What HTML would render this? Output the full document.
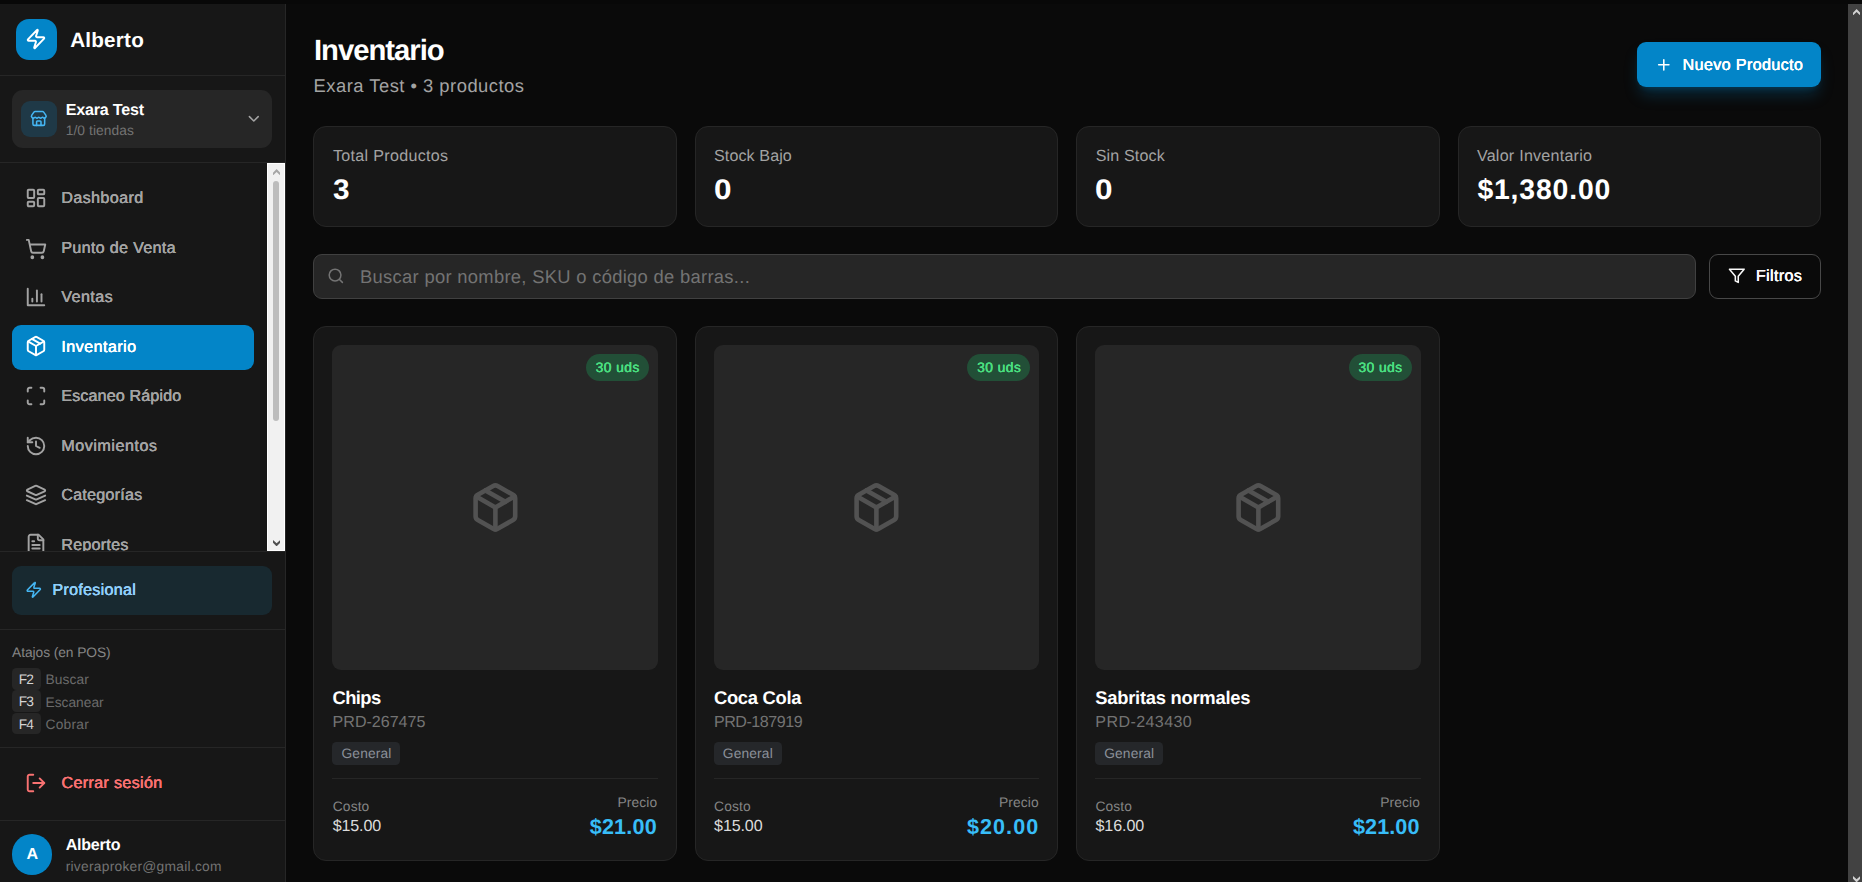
<!DOCTYPE html>
<html lang="es">
<head>
<meta charset="utf-8">
<title>Inventario - Exara Test</title>
<style>
*{box-sizing:border-box;margin:0;padding:0}
html,body{width:1862px;height:882px;overflow:hidden;background:#0a0a0a}
body{position:relative;font-family:"Liberation Sans",sans-serif;color:#fff}
a{color:inherit;text-decoration:none}
button{font:inherit;color:inherit;border:0;background:none;text-align:left}
.a{position:absolute}
.t{position:absolute;white-space:nowrap;line-height:1;text-rendering:geometricPrecision;font-family:"Liberation Sans",sans-serif;font-style:normal}
.ln{position:absolute;background:#262626}
svg.i{position:absolute;fill:none;stroke:currentColor;stroke-width:2.1;stroke-linecap:round;stroke-linejoin:round;overflow:visible}
.card{position:absolute;background:#171717;border:1px solid #262626;border-radius:13px}
.img{position:absolute;background:#262626;border-radius:9px}
.badge{position:absolute;background:#224f37;border-radius:14px}
.tag{position:absolute;background:#25272a;border-radius:4.5px}
.kbd{position:absolute;background:#262626;border-radius:4.5px;font:inherit}
</style>
</head>
<body>
<div class="a" style="left:0px;top:0px;width:1862px;height:4px;background:#080808;"></div>
<aside class="a sidebar" style="left:0px;top:4px;width:286px;height:878px;background:#171717;border-right:1px solid #262626;">
 <header class="a brand" style="left:0px;top:0px;width:285px;height:71px;">
  <div class="a logo" style="left:16px;top:15px;width:40.7px;height:40.8px;border-radius:13px;background:#0385c8;">
   <svg class="i" width="22" height="22" viewBox="0 0 24 24" style="left:8.9px;top:9.3px;color:#fff"><path d="M4 14a1 1 0 0 1-.78-1.63l9.9-10.2a.5.5 0 0 1 .86.46l-1.92 6.02A1 1 0 0 0 13 10h7a1 1 0 0 1 .78 1.63l-9.9 10.2a.5.5 0 0 1-.86-.46l1.92-6.02A1 1 0 0 0 11 14z"/></svg>
  </div>
  <strong class="t" style="left:70.2px;top:27.02px;font-size:20.69px;font-weight:700;color:#ffffff;letter-spacing:0.199px;">Alberto</strong>
 </header>
 <div class="ln" style="left:0px;top:71px;width:285px;height:1px;"></div>
 <div class="a store" style="left:12px;top:86px;width:260px;height:58px;border-radius:11px;background:#262626;">
  <div class="a" style="left:9.2px;top:11.4px;width:35.4px;height:35.4px;border-radius:9px;background:#1f3947;">
   <svg class="i" width="17.6" height="17.6" viewBox="0 0 24 24" style="left:9.1px;top:8.9px;color:#45b6f3"><path d="M15 21v-5a1 1 0 0 0-1-1h-4a1 1 0 0 0-1 1v5"/><path d="M17.774 10.31a1.12 1.12 0 0 0-1.549 0 2.5 2.5 0 0 1-3.451 0 1.12 1.12 0 0 0-1.548 0 2.5 2.5 0 0 1-3.452 0 1.12 1.12 0 0 0-1.549 0 2.5 2.5 0 0 1-3.77-3.248l2.889-4.184A2 2 0 0 1 7 2h10a2 2 0 0 1 1.653.873l2.895 4.192a2.5 2.5 0 0 1-3.774 3.244"/><path d="M4 10.95V19a2 2 0 0 0 2 2h12a2 2 0 0 0 2-2v-8.05"/></svg>
  </div>
  <strong class="t" style="left:53.7px;top:12.02px;font-size:16.09px;font-weight:700;color:#ffffff;letter-spacing:-0.193px;">Exara Test</strong>
  <span class="t" style="left:53.7px;top:34.02px;font-size:13.79px;font-weight:400;color:#737373;letter-spacing:0.086px;">1/0 tiendas</span>
  <svg class="i" width="17.6" height="17.6" viewBox="0 0 24 24" style="left:233.2px;top:20.2px;color:#a3a3a3"><path d="m6 9 6 6 6-6"/></svg>
 </div>
 <div class="ln" style="left:0px;top:158px;width:285px;height:1px;"></div>
 <nav class="a" style="left:0px;top:159px;width:267px;height:388px;overflow:hidden;">
  <a class="a item" style="left:12px;top:13px;width:242px;height:45px;">
   <svg class="i" width="22" height="22" viewBox="0 0 24 24" style="left:13.2px;top:10.9px;color:#a3a3a3"><rect width="7" height="9" x="3" y="3" rx="1"/><rect width="7" height="5" x="14" y="3" rx="1"/><rect width="7" height="9" x="14" y="12" rx="1"/><rect width="7" height="5" x="3" y="16" rx="1"/></svg>
   <span class="t" style="left:49.3px;top:14.02px;font-size:16.09px;font-weight:400;color:#a3a3a3;letter-spacing:0.405px;text-shadow:0.17px 0 0 currentColor,-0.17px 0 0 currentColor;">Dashboard</span>
  </a>
  <a class="a item" style="left:12px;top:63px;width:242px;height:45px;">
   <svg class="i" width="22" height="22" viewBox="0 0 24 24" style="left:13.4px;top:11.5px;color:#a3a3a3"><circle cx="8" cy="21" r="1"/><circle cx="19" cy="21" r="1"/><path d="M2.05 2.05h2l2.66 12.42a2 2 0 0 0 2 1.58h9.78a2 2 0 0 0 1.95-1.57l1.65-7.43H5.12"/></svg>
   <span class="t" style="left:49.3px;top:14.02px;font-size:16.09px;font-weight:400;color:#a3a3a3;letter-spacing:0.333px;text-shadow:0.17px 0 0 currentColor,-0.17px 0 0 currentColor;">Punto de Venta</span>
  </a>
  <a class="a item" style="left:12px;top:113px;width:242px;height:45px;">
   <svg class="i" width="22" height="22" viewBox="0 0 24 24" style="left:13.2px;top:9.9px;color:#a3a3a3"><path d="M3 3v18h18"/><path d="M18 17V9"/><path d="M13 17V5"/><path d="M8 17v-3"/></svg>
   <span class="t" style="left:49.3px;top:13.02px;font-size:16.09px;font-weight:400;color:#a3a3a3;letter-spacing:0.446px;text-shadow:0.17px 0 0 currentColor,-0.17px 0 0 currentColor;">Ventas</span>
  </a>
  <a class="a item active" style="left:12px;top:162px;width:242px;height:45px;border-radius:9px;background:#0385c8;">
   <svg class="i" width="22" height="22" viewBox="0 0 24 24" style="left:13.2px;top:10.4px;color:#fff"><path d="m7.5 4.27 9 5.15"/><path d="M21 8a2 2 0 0 0-1-1.73l-7-4a2 2 0 0 0-2 0l-7 4A2 2 0 0 0 3 8v8a2 2 0 0 0 1 1.73l7 4a2 2 0 0 0 2 0l7-4A2 2 0 0 0 21 16Z"/><path d="m3.3 7 8.7 5 8.7-5"/><path d="M12 22V12"/></svg>
   <span class="t" style="left:49.3px;top:14.02px;font-size:16.09px;font-weight:400;color:#ffffff;letter-spacing:0.466px;text-shadow:0.17px 0 0 currentColor,-0.17px 0 0 currentColor;">Inventario</span>
  </a>
  <a class="a item" style="left:12px;top:211px;width:242px;height:45px;">
   <svg class="i" width="22" height="22" viewBox="0 0 24 24" style="left:13.2px;top:10.9px;color:#a3a3a3"><path d="M3 7V5a2 2 0 0 1 2-2h2"/><path d="M17 3h2a2 2 0 0 1 2 2v2"/><path d="M21 17v2a2 2 0 0 1-2 2h-2"/><path d="M7 21H5a2 2 0 0 1-2-2v-2"/></svg>
   <span class="t" style="left:49.3px;top:14.02px;font-size:16.09px;font-weight:400;color:#a3a3a3;letter-spacing:0.146px;text-shadow:0.17px 0 0 currentColor,-0.17px 0 0 currentColor;">Escaneo Rápido</span>
  </a>
  <a class="a item" style="left:12px;top:261px;width:242px;height:45px;">
   <svg class="i" width="22" height="22" viewBox="0 0 24 24" style="left:13.2px;top:11.1px;color:#a3a3a3"><path d="M3 12a9 9 0 1 0 9-9 9.75 9.75 0 0 0-6.74 2.74L3 8"/><path d="M3 3v5h5"/><path d="M12 7v5l4 2"/></svg>
   <span class="t" style="left:49.3px;top:14.02px;font-size:16.09px;font-weight:400;color:#a3a3a3;letter-spacing:0.545px;text-shadow:0.17px 0 0 currentColor,-0.17px 0 0 currentColor;">Movimientos</span>
  </a>
  <a class="a item" style="left:12px;top:311px;width:242px;height:45px;">
   <svg class="i" width="22" height="22" viewBox="0 0 24 24" style="left:13.2px;top:9.9px;color:#a3a3a3"><path d="m12.83 2.18a2 2 0 0 0-1.66 0L2.6 6.08a1 1 0 0 0 0 1.83l8.58 3.91a2 2 0 0 0 1.66 0l8.58-3.9a1 1 0 0 0 0-1.83Z"/><path d="m22 17.65-9.17 4.16a2 2 0 0 1-1.66 0L2 17.65"/><path d="m22 12.65-9.17 4.16a2 2 0 0 1-1.66 0L2 12.65"/></svg>
   <span class="t" style="left:49.3px;top:13.02px;font-size:16.09px;font-weight:400;color:#a3a3a3;letter-spacing:0.249px;text-shadow:0.17px 0 0 currentColor,-0.17px 0 0 currentColor;">Categorías</span>
  </a>
  <a class="a item" style="left:12px;top:360px;width:242px;height:45px;">
   <svg class="i" width="22" height="22" viewBox="0 0 24 24" style="left:13.2px;top:10.4px;color:#a3a3a3"><path d="M15 2H6a2 2 0 0 0-2 2v16a2 2 0 0 0 2 2h12a2 2 0 0 0 2-2V7Z"/><path d="M14 2v4a2 2 0 0 0 2 2h4"/><path d="M10 9H8"/><path d="M16 13H8"/><path d="M16 17H8"/></svg>
   <span class="t" style="left:49.3px;top:14.02px;font-size:16.09px;font-weight:400;color:#a3a3a3;letter-spacing:0.264px;text-shadow:0.17px 0 0 currentColor,-0.17px 0 0 currentColor;">Reportes</span>
  </a>
 </nav>
 <div class="a scrollbar" style="left:267px;top:159px;width:18px;height:388px;background:#f1f1f1;border:1px solid #fff;">
  <svg class="a" width="7.2" height="6.4" viewBox="0 0 7.2 6.4" style="left:4.9px;top:4.8px"><polygon points="0,6.4 3.6,3.1 7.2,6.4 7.2,3.7 3.6,0 0,3.7" fill="#a6a6a6"/></svg>
  <div class="a" style="left:5.2px;top:17px;width:5.6px;height:240px;border-radius:3px;background:#bdbdbd;"></div>
  <svg class="a" width="7.2" height="6.4" viewBox="0 0 7.2 6.4" style="left:4.9px;top:375.7px"><polygon points="0,0 3.6,3.3 7.2,0 7.2,2.7 3.6,6.4 0,2.7" fill="#4f4f4f"/></svg>
 </div>
 <div class="ln" style="left:0px;top:547px;width:285px;height:1px;"></div>
 <div class="a plan" style="left:12px;top:562px;width:260px;height:49px;border-radius:9px;background:#182930;">
  <svg class="i" width="17.6" height="17.6" viewBox="0 0 24 24" style="left:13.2px;top:15.2px;color:#45b6f3"><path d="M4 14a1 1 0 0 1-.78-1.63l9.9-10.2a.5.5 0 0 1 .86.46l-1.92 6.02A1 1 0 0 0 13 10h7a1 1 0 0 1 .78 1.63l-9.9 10.2a.5.5 0 0 1-.86-.46l1.92-6.02A1 1 0 0 0 11 14z"/></svg>
  <span class="t" style="left:40.4px;top:16.02px;font-size:16.09px;font-weight:400;color:#90cff9;letter-spacing:0.295px;text-shadow:0.17px 0 0 currentColor,-0.17px 0 0 currentColor;">Profesional</span>
 </div>
 <div class="ln" style="left:0px;top:625px;width:285px;height:1px;"></div>
 <div class="a shortcuts" style="left:0px;top:626px;width:285px;height:117px;">
  <p class="t" style="left:12.1px;top:16.02px;font-size:13.79px;font-weight:400;color:#858585;letter-spacing:-0.070px;">Atajos (en POS)</p>
  <div class="a row" style="left:12px;top:38px;width:100px;height:21.6px;">
   <kbd class="kbd" style="left:0px;top:0px;width:29px;height:21.6px;">
    <span class="t" style="left:6.7px;top:5.02px;font-size:13.79px;font-weight:400;color:#d4d4d4;letter-spacing:-0.894px;">F2</span>
   </kbd>
   <span class="t" style="left:33.5px;top:5.02px;font-size:13.79px;font-weight:400;color:#6b6b6b;letter-spacing:0.079px;">Buscar</span>
  </div>
  <div class="a row" style="left:12px;top:60.4px;width:100px;height:21.6px;">
   <kbd class="kbd" style="left:0px;top:0px;width:29px;height:21.6px;">
    <span class="t" style="left:6.7px;top:4.62px;font-size:13.79px;font-weight:400;color:#d4d4d4;letter-spacing:-0.894px;">F3</span>
   </kbd>
   <span class="t" style="left:33.5px;top:5.62px;font-size:13.79px;font-weight:400;color:#6b6b6b;letter-spacing:-0.005px;">Escanear</span>
  </div>
  <div class="a row" style="left:12px;top:82.8px;width:100px;height:21.6px;">
   <kbd class="kbd" style="left:0px;top:0px;width:29px;height:21.6px;">
    <span class="t" style="left:6.7px;top:5.22px;font-size:13.79px;font-weight:400;color:#d4d4d4;letter-spacing:-0.894px;">F4</span>
   </kbd>
   <span class="t" style="left:33.5px;top:5.22px;font-size:13.79px;font-weight:400;color:#6b6b6b;letter-spacing:0.235px;">Cobrar</span>
  </div>
 </div>
 <div class="ln" style="left:0px;top:743px;width:285px;height:1px;"></div>
 <a class="a logout" style="left:12px;top:756px;width:260px;height:46px;">
  <svg class="i" width="22" height="22" viewBox="0 0 24 24" style="left:13.4px;top:12.3px;color:#f87171"><path d="M9 21H5a2 2 0 0 1-2-2V5a2 2 0 0 1 2-2h4"/><polyline points="16 17 21 12 16 7"/><line x1="21" x2="9" y1="12" y2="12"/></svg>
  <span class="t" style="left:49.5px;top:15.02px;font-size:16.09px;font-weight:400;color:#f87171;letter-spacing:0.349px;text-shadow:0.17px 0 0 currentColor,-0.17px 0 0 currentColor;">Cerrar sesión</span>
 </a>
 <div class="ln" style="left:0px;top:816px;width:285px;height:1px;"></div>
 <div class="a user" style="left:0px;top:817px;width:285px;height:61px;">
  <div class="a avatar" style="left:12px;top:13.2px;width:40.4px;height:40.4px;border-radius:50%;background:#0385c8;">
   <span class="t" style="left:14.6px;top:11.82px;font-size:16.09px;font-weight:700;color:#ffffff;">A</span>
  </div>
  <strong class="t" style="left:65.7px;top:16.02px;font-size:16.09px;font-weight:700;color:#ffffff;letter-spacing:-0.247px;">Alberto</strong>
  <span class="t" style="left:65.7px;top:39.02px;font-size:13.79px;font-weight:400;color:#737373;letter-spacing:0.261px;">riveraproker@gmail.com</span>
 </div>
</aside>
<main class="a" style="left:286px;top:4px;width:1562px;height:878px;">
 <header class="a" style="left:27px;top:26px;width:1508px;height:75px;">
  <h1 class="t" style="left:0.9px;top:7.02px;font-size:29.26px;font-weight:700;color:#ffffff;letter-spacing:-1.000px;">Inventario</h1>
  <p class="t" style="left:0.5px;top:47.02px;font-size:18.39px;font-weight:400;color:#a3a3a3;letter-spacing:0.494px;">Exara Test • 3 productos</p>
  <button class="a btn" style="left:1324px;top:12px;width:184px;height:45px;border-radius:9px;background:#0385c8;box-shadow:0 10px 16px -3px rgba(3,133,200,.28),0 4px 7px -4px rgba(3,133,200,.28);">
   <svg class="i" width="17.6" height="17.6" viewBox="0 0 24 24" style="left:18.2px;top:13.9px;color:#fff"><path d="M5 12h14"/><path d="M12 5v14"/></svg>
   <span class="t" style="left:45.6px;top:15.02px;font-size:16.09px;font-weight:400;color:#ffffff;letter-spacing:0.385px;text-shadow:0.17px 0 0 currentColor,-0.17px 0 0 currentColor;">Nuevo Producto</span>
  </button>
 </header>
 <section class="a stats" style="left:27px;top:122px;width:1508px;height:101px;">
  <article class="card" style="left:0px;top:0px;width:364px;height:101px;">
   <p class="t" style="left:19px;top:21.02px;font-size:16.09px;font-weight:400;color:#a3a3a3;letter-spacing:0.305px;">Total Productos</p>
   <strong class="t" style="left:19px;top:49.02px;font-size:28.38px;font-weight:700;color:#ffffff;transform:scaleX(1.05);transform-origin:0 0;">3</strong>
  </article>
  <article class="card" style="left:382px;top:0px;width:363px;height:101px;">
   <p class="t" style="left:18px;top:21.02px;font-size:16.09px;font-weight:400;color:#a3a3a3;letter-spacing:0.105px;">Stock Bajo</p>
   <strong class="t" style="left:17.7px;top:49.02px;font-size:28.38px;font-weight:700;color:#ffffff;transform:scaleX(1.11);transform-origin:0 0;">0</strong>
  </article>
  <article class="card" style="left:763px;top:0px;width:364px;height:101px;">
   <p class="t" style="left:18.7px;top:21.02px;font-size:16.09px;font-weight:400;color:#a3a3a3;letter-spacing:0.147px;">Sin Stock</p>
   <strong class="t" style="left:18.4px;top:49.02px;font-size:28.38px;font-weight:700;color:#ffffff;transform:scaleX(1.11);transform-origin:0 0;">0</strong>
  </article>
  <article class="card" style="left:1145px;top:0px;width:363px;height:101px;">
   <p class="t" style="left:17.9px;top:21.02px;font-size:16.09px;font-weight:400;color:#a3a3a3;letter-spacing:0.245px;">Valor Inventario</p>
   <strong class="t" style="left:18.4px;top:49.02px;font-size:28.38px;font-weight:700;color:#ffffff;letter-spacing:0.833px;">$1,380.00</strong>
  </article>
 </section>
 <div class="a toolbar" style="left:27px;top:250px;width:1508px;height:45px;">
  <label class="a search" style="left:0px;top:0px;width:1383px;height:45px;border-radius:9px;background:#262626;border:1px solid #404040;">
   <svg class="i" width="17.6" height="17.6" viewBox="0 0 24 24" style="left:13.2px;top:11.9px;color:#737373"><circle cx="11" cy="11" r="8"/><path d="m21 21-4.3-4.3"/></svg>
   <span class="t" style="left:46px;top:13.02px;font-size:18.39px;font-weight:400;color:#737373;letter-spacing:0.300px;">Buscar por nombre, SKU o código de barras...</span>
  </label>
  <button class="a btn" style="left:1396px;top:0px;width:112px;height:45px;border-radius:9px;background:#0a0a0a;border:1px solid #484848;">
   <svg class="i" width="17.6" height="17.6" viewBox="0 0 24 24" style="left:18px;top:12.4px;color:#fafafa"><polygon points="22 3 2 3 10 12.46 10 19 14 21 14 12.46 22 3"/></svg>
   <span class="t" style="left:45.9px;top:13.02px;font-size:16.09px;font-weight:400;color:#fafafa;letter-spacing:0.370px;text-shadow:0.17px 0 0 currentColor,-0.17px 0 0 currentColor;">Filtros</span>
  </button>
 </div>
 <section class="a products" style="left:27px;top:322px;width:1508px;height:535px;">
  <article class="card" style="left:0px;top:0px;width:364px;height:535px;">
   <div class="img" style="left:18px;top:18px;width:326px;height:324.5px;">
    <svg class="i" width="52.8" height="52.8" viewBox="0 0 24 24" style="left:136.6px;top:135.8px;color:#525252"><path d="m7.5 4.27 9 5.15"/><path d="M21 8a2 2 0 0 0-1-1.73l-7-4a2 2 0 0 0-2 0l-7 4A2 2 0 0 0 3 8v8a2 2 0 0 0 1 1.73l7 4a2 2 0 0 0 2 0l7-4A2 2 0 0 0 21 16Z"/><path d="m3.3 7 8.7 5 8.7-5"/><path d="M12 22V12"/></svg>
    <span class="badge" style="left:254px;top:9px;width:63px;height:26.8px;">
     <span class="t" style="left:9.7px;top:7.02px;font-size:13.79px;font-weight:400;color:#4ade80;letter-spacing:0.442px;text-shadow:0.17px 0 0 currentColor,-0.17px 0 0 currentColor;">30 uds</span>
    </span>
   </div>
   <h3 class="t" style="left:18.6px;top:362.02px;font-size:18.39px;font-weight:700;color:#ffffff;letter-spacing:-0.612px;">Chips</h3>
   <p class="t" style="left:18.6px;top:387.02px;font-size:16.09px;font-weight:400;color:#737373;letter-spacing:-0.017px;">PRD-267475</p>
   <span class="tag" style="left:18px;top:414.8px;width:67.8px;height:23.2px;">
    <span class="t" style="left:9.5px;top:5.22px;font-size:13.79px;font-weight:400;color:#8b9099;letter-spacing:0.145px;">General</span>
   </span>
   <div class="ln" style="left:18px;top:451px;width:326px;height:1px;"></div>
   <div class="a prices" style="left:18px;top:463px;width:326px;height:52px;">
    <span class="t" style="left:0.8px;top:10.02px;font-size:13.79px;font-weight:400;color:#858585;letter-spacing:0.121px;">Costo</span>
    <span class="t" style="left:0.8px;top:28.02px;font-size:16.09px;font-weight:400;color:#dcdcdc;letter-spacing:-0.177px;">$15.00</span>
    <span class="t" style="left:285.4px;top:6.02px;font-size:13.79px;font-weight:400;color:#858585;letter-spacing:0.124px;">Precio</span>
    <strong class="t" style="left:257.7px;top:26.02px;font-size:21.58px;font-weight:700;color:#38bdf8;letter-spacing:0.200px;">$21.00</strong>
   </div>
  </article>
  <article class="card" style="left:382px;top:0px;width:363px;height:535px;">
   <div class="img" style="left:18px;top:18px;width:325px;height:324.5px;">
    <svg class="i" width="52.8" height="52.8" viewBox="0 0 24 24" style="left:136.1px;top:135.8px;color:#525252"><path d="m7.5 4.27 9 5.15"/><path d="M21 8a2 2 0 0 0-1-1.73l-7-4a2 2 0 0 0-2 0l-7 4A2 2 0 0 0 3 8v8a2 2 0 0 0 1 1.73l7 4a2 2 0 0 0 2 0l7-4A2 2 0 0 0 21 16Z"/><path d="m3.3 7 8.7 5 8.7-5"/><path d="M12 22V12"/></svg>
    <span class="badge" style="left:253px;top:9px;width:63px;height:26.8px;">
     <span class="t" style="left:10.2px;top:7.02px;font-size:13.79px;font-weight:400;color:#4ade80;letter-spacing:0.442px;text-shadow:0.17px 0 0 currentColor,-0.17px 0 0 currentColor;">30 uds</span>
    </span>
   </div>
   <h3 class="t" style="left:17.9px;top:362.02px;font-size:18.39px;font-weight:700;color:#ffffff;letter-spacing:-0.270px;">Coca Cola</h3>
   <p class="t" style="left:17.9px;top:387.02px;font-size:16.09px;font-weight:400;color:#737373;letter-spacing:-0.461px;">PRD-187919</p>
   <span class="tag" style="left:18px;top:414.8px;width:67.8px;height:23.2px;">
    <span class="t" style="left:8.8px;top:5.22px;font-size:13.79px;font-weight:400;color:#8b9099;letter-spacing:0.145px;">General</span>
   </span>
   <div class="ln" style="left:18px;top:451px;width:325px;height:1px;"></div>
   <div class="a prices" style="left:18px;top:463px;width:325px;height:52px;">
    <span class="t" style="left:0.1px;top:10.02px;font-size:13.79px;font-weight:400;color:#858585;letter-spacing:0.121px;">Costo</span>
    <span class="t" style="left:0.1px;top:28.02px;font-size:16.09px;font-weight:400;color:#dcdcdc;letter-spacing:-0.138px;">$15.00</span>
    <span class="t" style="left:284.9px;top:6.02px;font-size:13.79px;font-weight:400;color:#858585;letter-spacing:0.124px;">Precio</span>
    <strong class="t" style="left:252.9px;top:26.02px;font-size:21.58px;font-weight:700;color:#38bdf8;letter-spacing:1.060px;">$20.00</strong>
   </div>
  </article>
  <article class="card" style="left:763px;top:0px;width:364px;height:535px;">
   <div class="img" style="left:18px;top:18px;width:326px;height:324.5px;">
    <svg class="i" width="52.8" height="52.8" viewBox="0 0 24 24" style="left:136.6px;top:135.8px;color:#525252"><path d="m7.5 4.27 9 5.15"/><path d="M21 8a2 2 0 0 0-1-1.73l-7-4a2 2 0 0 0-2 0l-7 4A2 2 0 0 0 3 8v8a2 2 0 0 0 1 1.73l7 4a2 2 0 0 0 2 0l7-4A2 2 0 0 0 21 16Z"/><path d="m3.3 7 8.7 5 8.7-5"/><path d="M12 22V12"/></svg>
    <span class="badge" style="left:254px;top:9px;width:63px;height:26.8px;">
     <span class="t" style="left:9.5px;top:7.02px;font-size:13.79px;font-weight:400;color:#4ade80;letter-spacing:0.442px;text-shadow:0.17px 0 0 currentColor,-0.17px 0 0 currentColor;">30 uds</span>
    </span>
   </div>
   <h3 class="t" style="left:18.3px;top:362.02px;font-size:18.39px;font-weight:700;color:#ffffff;letter-spacing:-0.264px;">Sabritas normales</h3>
   <p class="t" style="left:18.3px;top:387.02px;font-size:16.09px;font-weight:400;color:#737373;letter-spacing:0.394px;">PRD-243430</p>
   <span class="tag" style="left:18px;top:414.8px;width:67.8px;height:23.2px;">
    <span class="t" style="left:9.2px;top:5.22px;font-size:13.79px;font-weight:400;color:#8b9099;letter-spacing:0.145px;">General</span>
   </span>
   <div class="ln" style="left:18px;top:451px;width:326px;height:1px;"></div>
   <div class="a prices" style="left:18px;top:463px;width:326px;height:52px;">
    <span class="t" style="left:0.5px;top:10.02px;font-size:13.79px;font-weight:400;color:#858585;letter-spacing:0.121px;">Costo</span>
    <span class="t" style="left:0.5px;top:28.02px;font-size:16.09px;font-weight:400;color:#dcdcdc;letter-spacing:-0.078px;">$16.00</span>
    <span class="t" style="left:285.2px;top:6.02px;font-size:13.79px;font-weight:400;color:#858585;letter-spacing:0.124px;">Precio</span>
    <strong class="t" style="left:257.9px;top:26.02px;font-size:21.58px;font-weight:700;color:#38bdf8;letter-spacing:0.120px;">$21.00</strong>
   </div>
  </article>
 </section>
</main>
<div class="a scrollbar" style="left:1848px;top:4px;width:14px;height:878px;background:#424242;">
 <svg class="a" width="7.2" height="6.4" viewBox="0 0 7.2 6.4" style="left:4.9px;top:4.9px"><polygon points="0,6.4 3.6,3.1 7.2,6.4 7.2,3.7 3.6,0 0,3.7" fill="#d2d2d2"/></svg>
 <svg class="a" width="7.2" height="6.4" viewBox="0 0 7.2 6.4" style="left:4.9px;top:871.8px"><polygon points="0,0 3.6,3.3 7.2,0 7.2,2.7 3.6,6.4 0,2.7" fill="#d2d2d2"/></svg>
</div>
</body>
</html>
